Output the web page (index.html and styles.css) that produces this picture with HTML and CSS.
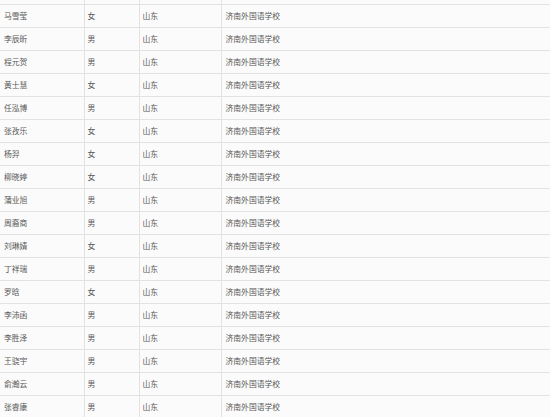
FILE: index.html
```html
<!DOCTYPE html>
<html lang="zh">
<head>
<meta charset="utf-8">
<link rel="stylesheet" href="styles.css">
</head>
<body>
<table class="roster">
  <colgroup><col class="c-name"><col class="c-sex"><col class="c-prov"><col class="c-school"></colgroup>
  <tbody>
    <tr class="cut"><td></td><td></td><td></td><td></td></tr>
    <tr><td>马雪莹</td><td>女</td><td>山东</td><td>济南外国语学校</td></tr>
    <tr><td>李辰昕</td><td>男</td><td>山东</td><td>济南外国语学校</td></tr>
    <tr><td>程元贺</td><td>男</td><td>山东</td><td>济南外国语学校</td></tr>
    <tr><td>黄士慧</td><td>女</td><td>山东</td><td>济南外国语学校</td></tr>
    <tr><td>任泓博</td><td>男</td><td>山东</td><td>济南外国语学校</td></tr>
    <tr><td>张孜乐</td><td>女</td><td>山东</td><td>济南外国语学校</td></tr>
    <tr><td>杨羿</td><td>女</td><td>山东</td><td>济南外国语学校</td></tr>
    <tr><td>柳晓婷</td><td>女</td><td>山东</td><td>济南外国语学校</td></tr>
    <tr><td>蒲业旭</td><td>男</td><td>山东</td><td>济南外国语学校</td></tr>
    <tr><td>周裔商</td><td>男</td><td>山东</td><td>济南外国语学校</td></tr>
    <tr><td>刘琳婧</td><td>女</td><td>山东</td><td>济南外国语学校</td></tr>
    <tr><td>丁祥瑞</td><td>男</td><td>山东</td><td>济南外国语学校</td></tr>
    <tr><td>罗晗</td><td>女</td><td>山东</td><td>济南外国语学校</td></tr>
    <tr><td>李沛函</td><td>男</td><td>山东</td><td>济南外国语学校</td></tr>
    <tr><td>李胜泽</td><td>男</td><td>山东</td><td>济南外国语学校</td></tr>
    <tr><td>王骁宇</td><td>男</td><td>山东</td><td>济南外国语学校</td></tr>
    <tr><td>俞瀚云</td><td>男</td><td>山东</td><td>济南外国语学校</td></tr>
    <tr><td>张睿康</td><td>男</td><td>山东</td><td>济南外国语学校</td></tr>
  </tbody>
</table>
</body>
</html>
```
FILE: styles.css
```css
html, body {
  margin: 0;
  padding: 0;
  background: #fbfbfb;
  overflow: hidden;
}
.roster {
  border-collapse: collapse;
  table-layout: fixed;
  width: 550px;
  font-family: "Noto Sans CJK SC", "Microsoft YaHei", sans-serif;
  font-size: 7.8px;
  color: #595959;
  background: #fbfbfb;
}
.c-name { width: 84px; }
.c-sex { width: 55px; }
.c-prov { width: 82px; }
.c-school { width: 329px; }
.roster td {
  height: 22px;
  padding: 0 0 0 3px;
  border: 1px solid #e2e2e2;
  line-height: 22px;
  white-space: nowrap;
  vertical-align: middle;
}
.roster td:first-child {
  border-left: none;
  padding-left: 4px;
}
.roster td:last-child {
  border-right: none;
  padding-left: 4px;
}
.roster tr.cut td {
  height: 4px;
  line-height: 4px;
  border-top: none;
}
```
